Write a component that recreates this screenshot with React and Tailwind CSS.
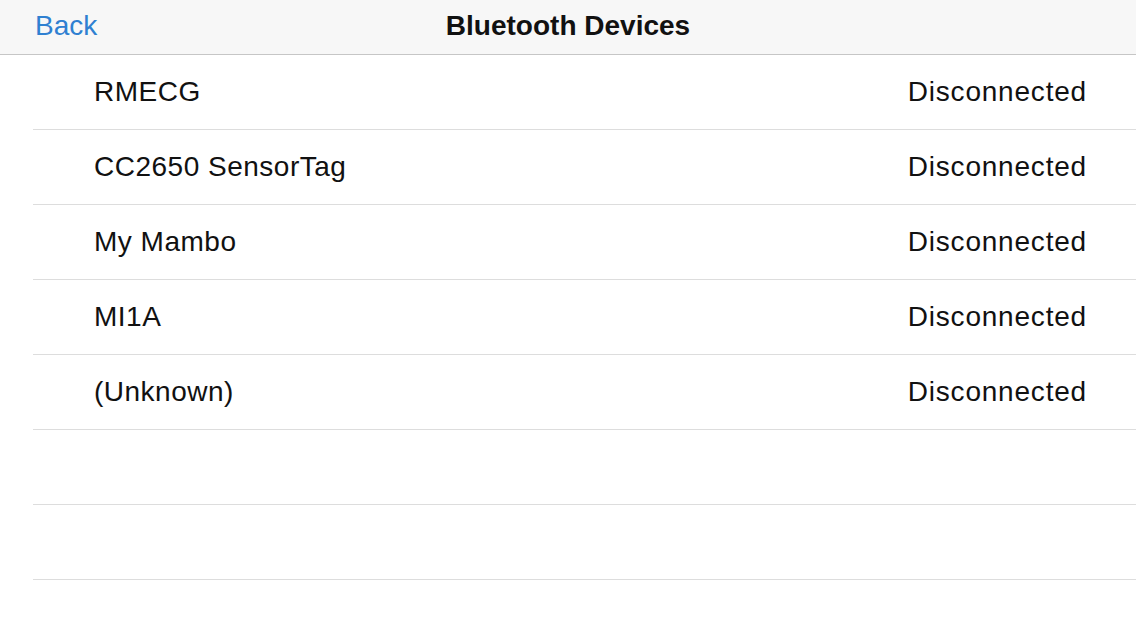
const devices = [
  { name: "RMECG", status: "Disconnected" },
  { name: "CC2650 SensorTag", status: "Disconnected" },
  { name: "My Mambo", status: "Disconnected" },
  { name: "MI1A", status: "Disconnected" },
  { name: "(Unknown)", status: "Disconnected" },
  { name: "", status: "" },
  { name: "", status: "" },
];

const App = () => {
  return (
    <div
      className="w-[1136px] h-[639px] bg-white overflow-hidden text-[#111]"
      style={{ fontFamily: '"Liberation Sans", Arial, sans-serif' }}
    >
      <div className="relative h-[55px] bg-[#f7f7f7] border-b border-[#c6c6c6] flex items-center justify-center">
        <button className="absolute left-[35px] top-[9px] text-[28px] leading-[34px] text-[#2f80d1]">
          Back
        </button>
        <h1 className="text-[28px] font-bold leading-[34px] -mt-[2px]">
          Bluetooth Devices
        </h1>
      </div>
      <ul className="pl-[33px]">
        {devices.map((d, i) => (
          <li
            key={i}
            className="h-[75px] border-b border-[#dddddd] flex items-center justify-between pl-[61px] pr-[49px]"
          >
            <span className="text-[28px] leading-[34px] tracking-[0.5px]">{d.name}</span>
            <span className="text-[28px] leading-[34px] tracking-[0.8px]">{d.status}</span>
          </li>
        ))}
      </ul>
    </div>
  );
};

export default App;
